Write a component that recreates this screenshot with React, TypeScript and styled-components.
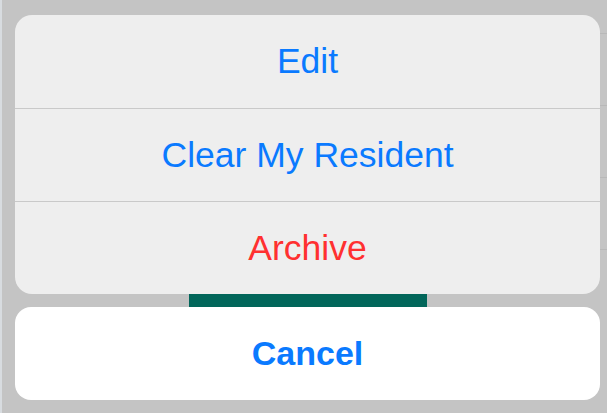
import { FunctionComponent } from "react";
import styled, { createGlobalStyle } from "styled-components";

const GlobalStyle = createGlobalStyle`
  html, body {
    margin: 0;
    padding: 0;
    background: #c4c4c4;
  }
  * {
    box-sizing: border-box;
  }
`;

const Screen = styled.div`
  position: relative;
  width: 607px;
  height: 413px;
  overflow: hidden;
  background: #c4c4c4;
  border-left: 2px solid #d8dce0;
  font-family: "Liberation Sans", Arial, sans-serif;
`;

const BackgroundList = styled.div`
  display: flex;
  flex-direction: column;
  padding: 33px 0 0 590px;
`;

const BackgroundRow = styled.div`
  height: 72px;
  border-top: 1px solid #b8b8b8;
`;

const BackdropButton = styled.div`
  position: absolute;
  left: 187px;
  top: 270px;
  width: 238px;
  height: 50px;
  background: #02665a;
`;

const Sheet = styled.div`
  position: absolute;
  left: 13px;
  top: 15px;
  width: 585px;
  display: flex;
  flex-direction: column;
  gap: 13px;
`;

const ActionGroup = styled.div`
  display: flex;
  flex-direction: column;
  background: #eeeeee;
  border-radius: 17px;
  overflow: hidden;
`;

const ActionItem = styled.div<{ $color: string }>`
  height: 93px;
  display: flex;
  align-items: center;
  justify-content: center;
  font-size: 35.5px;
  color: ${(p) => p.$color};
  & + & {
    border-top: 1px solid #c9c9c9;
  }
`;

const CancelButton = styled.div`
  height: 93px;
  display: flex;
  align-items: center;
  justify-content: center;
  background: #ffffff;
  border-radius: 16px;
  font-size: 34px;
  font-weight: 700;
  color: #0a7aff;
`;

const App: FunctionComponent = () => {
  return (
    <>
      <GlobalStyle />
      <Screen>
        <BackgroundList>
          <BackgroundRow />
          <BackgroundRow />
          <BackgroundRow />
          <BackgroundRow />
        </BackgroundList>
        <BackdropButton />
        <Sheet>
          <ActionGroup>
            <ActionItem $color="#0a7aff">Edit</ActionItem>
            <ActionItem $color="#0a7aff">Clear My Resident</ActionItem>
            <ActionItem $color="#ff3030">Archive</ActionItem>
          </ActionGroup>
          <CancelButton>Cancel</CancelButton>
        </Sheet>
      </Screen>
    </>
  );
};

export default App;
